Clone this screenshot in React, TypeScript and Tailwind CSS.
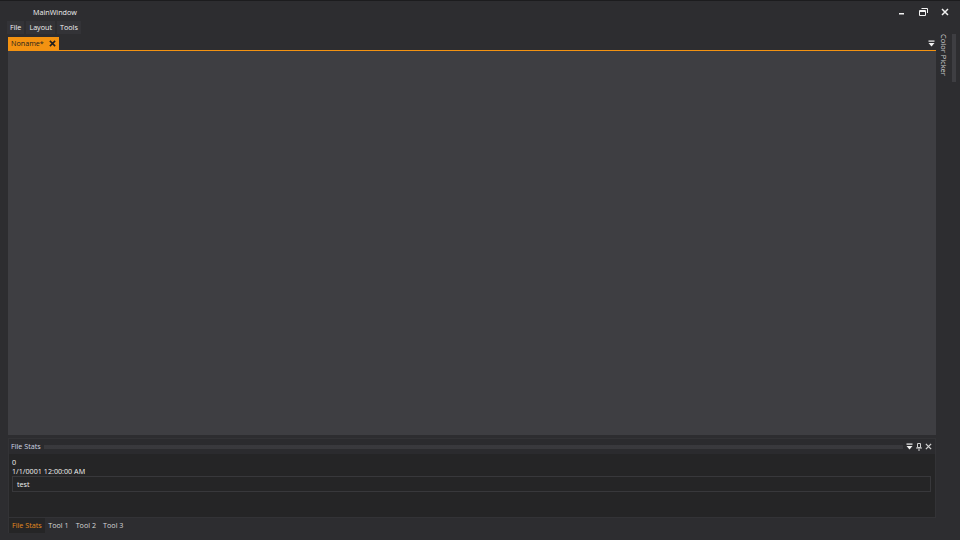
import React from "react";

const FONT = { fontFamily: '"Open Sans", "Noto Sans", "Liberation Sans", sans-serif' };

function MinIcon() {
  return (
    <svg width="8" height="8" viewBox="0 0 8 8">
      <rect x="1" y="5" width="5" height="1.5" fill="#f1f1f1" />
    </svg>
  );
}

function RestoreIcon() {
  return (
    <svg width="9" height="8" viewBox="0 0 9 8">
      <path d="M2.5 0.5h6v4.5M0.5 2.5h6v5h-6z M0.5 3.5h6" fill="none" stroke="#f1f1f1" strokeWidth="1" />
    </svg>
  );
}

function CloseIcon({ color = "#f1f1f1", size = 8, weight = 1.5 }: { color?: string; size?: number; weight?: number }) {
  return (
    <svg width={size} height={size} viewBox="0 0 8 8">
      <path d="M1 1L7 7M7 1L1 7" stroke={color} strokeWidth={weight} />
    </svg>
  );
}

function DropIcon() {
  return (
    <svg width="7" height="7" viewBox="0 0 7 7">
      <rect x="0.5" y="0.5" width="6" height="1.2" fill="#f1f1f1" />
      <path d="M0.5 3h6L3.5 6.5z" fill="#f1f1f1" />
    </svg>
  );
}

function PinIcon() {
  return (
    <svg width="6" height="8" viewBox="0 0 6 8">
      <path d="M1.5 0.5h3v4h-3z" fill="none" stroke="#d0d0d0" />
      <rect x="0" y="4.5" width="6" height="1" fill="#d0d0d0" />
      <rect x="2.5" y="5.5" width="1" height="2.5" fill="#d0d0d0" />
    </svg>
  );
}

export default function App() {
  return (
    <div
      className="w-[960px] h-[540px] bg-[#2d2d30] flex flex-col overflow-hidden text-[#f1f1f1] text-[7.2px] leading-none border-t border-[#1c1c1e]"
      style={FONT}
    >
      {/* Title bar */}
      <div className="h-[20px] flex items-center pt-[3px] shrink-0">
        <span className="ml-[33px]">MainWindow</span>
        <div className="ml-auto flex items-center gap-[13px] mr-[11px] mt-[-2px]">
          <MinIcon />
          <RestoreIcon />
          <CloseIcon />
        </div>
      </div>

      <div className="flex flex-1 min-h-0">
        {/* Main column */}
        <div className="flex flex-col flex-1 min-w-0">
          {/* Menu */}
          <div className="h-[13px] flex items-stretch pl-[7px] gap-[2px] shrink-0">
            <div className="bg-[#333337] px-[3px] flex items-center">File</div>
            <div className="bg-[#333337] px-[3px] flex items-center">Layout</div>
            <div className="bg-[#333337] px-[3px] flex items-center">Tools</div>
          </div>

          <div className="flex flex-col flex-1 min-h-0 pl-[8px] mt-[3px]">
            {/* Document tabs */}
            <div className="h-[13px] flex items-end shrink-0">
              <div className="h-[13px] bg-[#f39211] text-[#1e1e1e] flex items-center px-[3px] gap-[5px]">
                <span>Noname*</span>
                <CloseIcon color="#1e1e1e" size={7} weight={1.8} />
              </div>
              <div className="ml-auto mr-[1px] mb-[3px]">
                <DropIcon />
              </div>
            </div>
            <div className="h-[1px] bg-[#f39211] shrink-0" />
            {/* Document area */}
            <div className="flex-1 bg-[#3e3e42]" />

            {/* Tool panel */}
            <div className="mt-[3px] h-[80px] flex flex-col border border-[#333336] shrink-0">
              <div className="h-[15px] flex items-center bg-[#2b2b2e] px-[2px] gap-[3px]">
                <span className="text-[#cfd6e3]">File Stats</span>
                <div
                  className="flex-1 h-[4px]"
                  style={{
                    backgroundImage: "radial-gradient(circle, #3a3a3e 0.7px, transparent 0.8px)",
                    backgroundSize: "2px 2px",
                  }}
                />
                <div className="flex items-center gap-[3px] pr-[1px]">
                  <DropIcon />
                  <PinIcon />
                  <CloseIcon color="#d0d0d0" size={7} />
                </div>
              </div>
              <div className="flex-1 bg-[#252526] flex flex-col px-[3px] pt-[5px] gap-[2px]">
                <div>0</div>
                <div>1/1/0001 12:00:00 AM</div>
                <div className="h-[16px] border border-[#38383b] flex items-center px-[4px] mt-[-1px] mr-[1px]">test</div>
              </div>
            </div>

            {/* Bottom tabs */}
            <div className="h-[15px] flex items-stretch shrink-0 mb-[7px]">
              <div className="bg-[#252526] text-[#e38a1e] px-[3px] flex items-center border-l border-[#333336]">File Stats</div>
              <div className="px-[3.5px] flex items-center text-[#d6d6d6]">Tool 1</div>
              <div className="px-[3.5px] flex items-center text-[#d6d6d6]">Tool 2</div>
              <div className="px-[3.5px] flex items-center text-[#d6d6d6]">Tool 3</div>
            </div>
          </div>
        </div>

        {/* Right auto-hide strip */}
        <div className="w-[24px] shrink-0 flex pt-[13px] pl-[3px] gap-[4px]">
          <div className="w-[9px] flex justify-center">
            <span className="[writing-mode:vertical-rl] text-[#d0d0d0] text-[7.5px]">Color Picker</span>
          </div>
          <div className="w-[4px] h-[48px] bg-[#3e3e42]" />
        </div>
      </div>
    </div>
  );
}
